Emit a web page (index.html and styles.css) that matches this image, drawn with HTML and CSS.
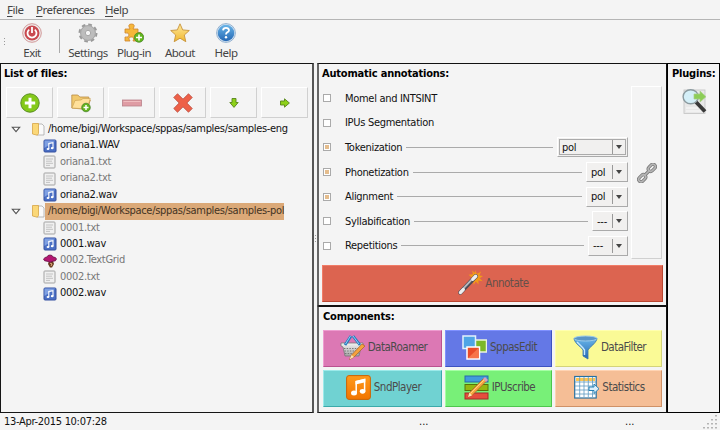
FILE: index.html
```html
<!DOCTYPE html>
<html lang="en">
<head>
<meta charset="utf-8">
<title>SPPAS</title>
<link rel="stylesheet" href="styles.css">
</head>
<body>
<svg class="defs" aria-hidden="true">
  <defs>
    <linearGradient id="gBlue" x2="0" y2="1"><stop stop-color="#68b4e8"/><stop offset="1" stop-color="#2568b4"/></linearGradient>
    <linearGradient id="gGold" x2="0" y2="1"><stop stop-color="#ffe89a"/><stop offset="1" stop-color="#f0b830"/></linearGradient>
    <linearGradient id="gSilver" x2="0" y2="1"><stop stop-color="#f4f4f4"/><stop offset="1" stop-color="#a4a4a4"/></linearGradient>
    <linearGradient id="gOrange" x2="0" y2="1"><stop stop-color="#ff9a1c"/><stop offset="1" stop-color="#f27500"/></linearGradient>
    <symbol id="folder" viewBox="0 0 14 14"><path d="M6 2h5l2 2v9H6z" fill="#fafafa" stroke="#aaa" stroke-width=".8"/><path d="M1.5 1.5h6v10l-1.2 1.7-4.8-1.2z" fill="#fbd878" stroke="#d5a546" stroke-width=".8"/></symbol>
    <symbol id="wav" viewBox="0 0 14 14"><rect x="1" y="1" width="12" height="12" rx="1" fill="#4a6fc4" stroke="#3451a0"/><path d="M1.5 1.5h11L1.5 9z" fill="#7fa0e2"/><path d="M5.8 10V4.5l4.2-.8V9" fill="none" stroke="#fff" stroke-width="1.1"/><ellipse cx="5" cy="10" rx="1.4" ry="1.1" fill="#fff"/><ellipse cx="9.2" cy="9.2" rx="1.4" ry="1.1" fill="#fff"/></symbol>
    <symbol id="txt" viewBox="0 0 14 14"><rect x="1" y="1" width="11" height="12" rx=".8" fill="#f0f0f0" stroke="#a2a2a2"/><path d="M3 4h7M3 6.2h6M3 8.3h7M3 10.4h4" stroke="#c2c2c2"/></symbol>
    <symbol id="grid" viewBox="0 0 14 14"><path d="M6 7h4l1 3-2 3.6H7L5 10z" fill="#6a3d22"/><path d="M7 9l2 1-1 2" stroke="#e9b486" fill="none"/><path d="M.5 5Q2 3 4 3q.5-2 3-2t3 2q3 0 3.5 2Q13 7.5 10 7.2L7 8.2 4 7.2Q1 7.5.5 5z" fill="#b31672" stroke="#671044" stroke-width=".8"/></symbol>
    <symbol id="tri" viewBox="0 0 8 6"><path d="M.8 1h6.4L4 4.8z" fill="#fff" stroke="#555" stroke-width=".9"/></symbol>
    <symbol id="arrow" viewBox="0 0 12 12"><path d="M1.5 4h4V1.8L10.4 6l-4.9 4.2V8h-4z" fill="#8ed119" stroke="#57851c" stroke-width=".9"/></symbol>
  </defs>
</svg>
<div class="window">
  <nav class="menubar"><span class="m1"><u>F</u>ile</span><span class="m2"><u>P</u>references</span><span class="m3"><u>H</u>elp</span></nav>
  <header class="toolbar">
    <i class="grip"></i>
    <div class="tool exit"><svg viewBox="0 0 20 20"><circle cx="10" cy="10" r="9.3" fill="#eee" stroke="#c98080" stroke-width=".8"/><circle cx="10" cy="10" r="7.5" fill="#c94a50"/><path d="M7.2 6.6a4.5 4.5 0 1 0 5.6 0M10 4v6" fill="none" stroke="#fff" stroke-width="1.8"/></svg><span>Exit</span></div>
    <i class="divider"></i>
    <div class="tool settings"><svg viewBox="0 0 20 20"><circle cx="10" cy="10" r="8" fill="none" stroke="#999" stroke-width="3" stroke-dasharray="3.5 2.78"/><circle cx="10" cy="10" r="5.3" fill="none" stroke="#bdbdbd" stroke-width="5"/><circle cx="10" cy="10" r="7.4" fill="none" stroke="#a6a6a6" stroke-width="1"/><circle cx="10" cy="10" r="2.7" fill="#f5f5f5" stroke="#888" stroke-width=".7"/></svg><span>Settings</span></div>
    <div class="tool plugin"><svg viewBox="0 0 20 20"><path d="M1 6h5Q3 1 7.5 1T9 6h5v4q4-2 4 2t-4 2v4H9q2-4-1.8-4T6 18H1v-4q4 1 4-2T1 10z" fill="#f6b73a" stroke="#ce842b" stroke-width=".8"/><circle cx="15" cy="14.5" r="4.8" fill="#62b61c" stroke="#42812b" stroke-width=".7"/><path d="M12 14.5h6M15 11.5v6" stroke="#fff" stroke-width="1.6"/></svg><span>Plug-in</span></div>
    <div class="tool about"><svg viewBox="0 0 20 20"><path d="M10 .8l2.7 6.1 6.6.6-5 4.5 1.5 6.7L10 15.2 4.2 18.7 5.7 12 .7 7.5l6.6-.6z" fill="url(#gGold)" stroke="#c7933b" stroke-width=".9"/></svg><span>About</span></div>
    <div class="tool help"><svg viewBox="0 0 20 20"><circle cx="10" cy="10" r="9.4" fill="#dce9f5" stroke="#6b94bd" stroke-width=".7"/><circle cx="10" cy="10" r="8.3" fill="url(#gBlue)"/><path d="M7 7.3q.3-2.4 3-2.4t3 2.3q0 1.4-1.8 2.2-1.2.6-1.2 2" fill="none" stroke="#fff" stroke-width="1.8"/><circle cx="10" cy="14.2" r="1.2" fill="#fff"/></svg><span>Help</span></div>
  </header>
  <main class="workspace">
    <section class="files">
      <h2>List of files:</h2>
      <div class="file-buttons">
        <button><svg viewBox="0 0 20 20"><circle cx="10" cy="10" r="9.2" fill="#85c91a" stroke="#598e22" stroke-width="1"/><path d="M10 4.8v10.4M4.8 10h10.4" stroke="#fff" stroke-width="3"/></svg></button>
        <button><svg viewBox="0 0 20 20"><path d="M.8 15V2h6l2 2h9v3h1.5l-3 9.5z" fill="#f1c96d" stroke="#b98b43" stroke-width=".8"/><path d="M1 15L4 7.5l6-.5 2-1.5h7.3L16 16z" fill="#ffe09a" stroke="#c69a4d" stroke-width=".6"/><circle cx="15" cy="14.5" r="4.3" fill="#65b31e" stroke="#3f7a25" stroke-width=".7"/><path d="M12.5 14.5h5M15 12v5" stroke="#fff" stroke-width="1.5"/></svg></button>
        <button><svg viewBox="0 0 20 20"><rect x=".5" y="7" width="19" height="6" fill="#df9ca4" stroke="#b9828a" stroke-width=".8"/><path d="M1.5 8.5h17" stroke="#f0bdc0"/></svg></button>
        <button><svg viewBox="0 0 20 20"><path d="M4.5.8L10 6.2 15.5.8l3.7 3.7L13.8 10l5.4 5.5-3.7 3.7-5.5-5.4-5.5 5.4-3.7-3.7L6.2 10 .8 4.5z" fill="#ee6048" stroke="#bd5144" stroke-width=".9"/></svg></button>
        <button><svg class="small-icon down"><use href="#arrow"/></svg></button>
        <button><svg class="small-icon"><use href="#arrow"/></svg></button>
      </div>
      <ul class="tree">
        <li class="dir"><svg class="tri"><use href="#tri"/></svg><svg><use href="#folder"/></svg><span>/home/bigi/Workspace/sppas/samples/samples-eng</span></li>
        <li><svg><use href="#wav"/></svg><span>oriana1.WAV</span></li>
        <li class="muted"><svg><use href="#txt"/></svg><span>oriana1.txt</span></li>
        <li class="muted"><svg><use href="#txt"/></svg><span>oriana2.txt</span></li>
        <li><svg><use href="#wav"/></svg><span>oriana2.wav</span></li>
        <li class="dir selected"><svg class="tri"><use href="#tri"/></svg><svg><use href="#folder"/></svg><span>/home/bigi/Workspace/sppas/samples/samples-pol</span></li>
        <li class="muted"><svg><use href="#txt"/></svg><span>0001.txt</span></li>
        <li><svg><use href="#wav"/></svg><span>0001.wav</span></li>
        <li class="muted"><svg><use href="#grid"/></svg><span>0002.TextGrid</span></li>
        <li class="muted"><svg><use href="#txt"/></svg><span>0002.txt</span></li>
        <li><svg><use href="#wav"/></svg><span>0002.wav</span></li>
      </ul>
    </section>
    <div class="sash"><i class="grip"></i></div>
    <div class="middle">
      <section class="annotations">
        <h2>Automatic annotations:</h2>
        <div class="annotation-body">
          <div class="steps">
            <div class="step"><i class="check"></i><span>Momel and INTSINT</span></div>
            <div class="step"><i class="check"></i><span>IPUs Segmentation</span></div>
            <div class="step"><i class="check on"></i><span>Tokenization</span><hr><div class="combo wide"><b>pol</b><i></i></div></div>
            <div class="step"><i class="check on"></i><span>Phonetization</span><hr><div class="combo"><b>pol</b><i></i></div></div>
            <div class="step"><i class="check on"></i><span>Alignment</span><hr><div class="combo"><b>pol</b><i></i></div></div>
            <div class="step"><i class="check"></i><span>Syllabification</span><hr><div class="combo narrow"><b>---</b><i></i></div></div>
            <div class="step"><i class="check"></i><span>Repetitions</span><hr><div class="combo dash"><b>---</b><i></i></div></div>
          </div>
          <button class="link"><svg viewBox="0 0 20 20"><g fill="none" stroke="#777" stroke-width="3.2"><rect x="10.8" y="2.4" width="8" height="4.8" rx="2.4" transform="rotate(-45 14.8 4.8)"/><rect x="1.2" y="12.8" width="8" height="4.8" rx="2.4" transform="rotate(-45 5.2 15.2)"/><path d="M7 13l6-6"/></g><g fill="none" stroke="#b5b5b5" stroke-width="1.7"><rect x="10.8" y="2.4" width="8" height="4.8" rx="2.4" transform="rotate(-45 14.8 4.8)"/><rect x="1.2" y="12.8" width="8" height="4.8" rx="2.4" transform="rotate(-45 5.2 15.2)"/><path d="M7 13l6-6"/></g></svg></button>
        </div>
        <button class="annotate"><svg viewBox="0 0 26 26"><path d="M18 0l1.5 4.2L24 1.5l-1.8 4.2 3.8.5-3.4 2.5 3 3.1-4.4-.8.2 4-3-3-2 3.5-.9-4.5-4.3.5L14.5 8 11 5l4.5-.5-.8-4 3 2.5z" fill="#f29a19"/><path d="M2.5 23.5l16-17" stroke="#4c4c55" stroke-width="4.5" stroke-linecap="round"/><path d="M2.2 22.8l16-17" stroke="#b7bac0" stroke-width="2"/><path d="M2.5 23.5l3-3.2M15.5 9.6l3-3.1" stroke="#eee" stroke-width="3.4" stroke-linecap="round"/></svg><span>Annotate</span></button>
      </section>
      <section class="components">
        <h2>Components:</h2>
        <div class="component-grid">
          <button class="pink"><svg viewBox="0 0 25 25"><path d="M1 8h22v3l-2 1-2 9H5L3 12l-2-1z" fill="url(#gSilver)" stroke="#777" stroke-width=".8"/><path d="M4 13.5h16M4.5 16h15M5 18.5h14" stroke="#777" stroke-width="1.1" stroke-dasharray="1.4 1.3"/><path d="M5 10l6-9M20 10l-7-9" fill="none" stroke="#2779bd" stroke-width="2.8"/><path d="M5.5 9l5-8M19 9l-6-8" fill="none" stroke="#8ed0f5" stroke-width="1"/><path d="M9.5 24.5l2-4.5L22 9l3 2-11 11z" fill="#f5a13c" stroke="#a46328" stroke-width=".7"/><path d="M9.5 24.5l2-4.5 2.5 2z" fill="#fce1b3"/></svg><span>DataRoamer</span></button>
          <button class="blue"><svg viewBox="0 0 25 25"><rect x="13" y="5" width="11.5" height="12" fill="#7cb729" stroke="#eaf3dc" stroke-width="1.5"/><rect x="1" y="1" width="12.5" height="12.5" fill="#4fa5e6" stroke="#e3f1fb" stroke-width="1.5"/><rect x="5" y="12" width="12.5" height="12" fill="#ea4b29" stroke="#fff" stroke-width="1.5"/><path d="M6 23l10.5-10v10z" fill="#f7744a"/></svg><span>SppasEdit</span></button>
          <button class="yellow"><svg viewBox="0 0 25 25"><path d="M1 3.5h23q0 3-7.5 9.5l-1.5 2v9l-5-3v-6L8.5 13Q1 7 1 3.5z" fill="url(#gBlue)" stroke="#3773a8" stroke-width=".8"/><path d="M4 7l6 6 1.5 2v5" stroke="#c5e9ff" stroke-width="1.4" fill="none"/><ellipse cx="12.5" cy="3.5" rx="11.5" ry="2.5" fill="#5b95c6" stroke="#9ccbea" stroke-width="1"/></svg><span>DataFilter</span></button>
          <button class="teal"><svg viewBox="0 0 25 25"><rect x=".6" y=".6" width="23.8" height="23.8" rx="2.4" fill="url(#gOrange)" stroke="#cc6405"/><path d="M10.2 18V6.5l8.4-2v12" stroke="#fff" stroke-width="1.5" fill="none"/><path d="M9.5 6l9.8-2.3v3.5L9.5 9.5z" fill="#fff"/><ellipse cx="8" cy="18" rx="3" ry="2.5" fill="#fff"/><ellipse cx="16.6" cy="16.3" rx="2.8" ry="2.4" fill="#fff"/></svg><span>SndPlayer</span></button>
          <button class="green"><svg viewBox="0 0 25 25"><rect x="1" y="1" width="23" height="6" fill="#419bdc" stroke="#286ba5"/><rect x="1" y="9.5" width="23" height="6" fill="#94b710" stroke="#58720b"/><rect x="1" y="18" width="23" height="6" fill="#e54d3d" stroke="#a32d2b"/><path d="M4 22l1.5-4.5L20 3l3 2.5L8 20.5z" fill="#f6a540" stroke="#9c5e25" stroke-width=".7"/><path d="M4 22l1.5-4.5L8 20.5z" fill="#ffe5b4"/><path d="M6.5 18.5L21 4" stroke="#ffd47c"/><path d="M19 4l2-2 3 3-2 2z" fill="#d6a1c0"/></svg><span>IPUscribe</span></button>
          <button class="peach"><svg viewBox="0 0 25 25"><rect x=".7" y="1.5" width="21.5" height="21.5" fill="#fff" stroke="#2871a0" stroke-width="1.2"/><path d="M2 3h19v3H2z" fill="#ffc54f"/><path d="M5.7 2v20M10 2v20M14.3 2v20M18.5 2v20M1 7h21M1 11h21M1 15h21M1 19h21" stroke="#5d9bc2" stroke-width=".8"/><path d="M15 12h5V9l5 4.7-5 4.8v-3h-5z" fill="#ddf0fc" stroke="#2781b5"/></svg><span>Statistics</span></button>
        </div>
      </section>
    </div>
    <section class="plugins">
      <h2>Plugins:</h2>
      <svg viewBox="0 0 25 25"><rect x="2" y="1" width="21" height="23.5" fill="#e8e8e8" stroke="#c2c2c2" stroke-width=".8"/><path d="M4 19h12M4 22h15" stroke="#fafafa"/><path d="M14 13l9 9.5" stroke="#393939" stroke-width="3.8"/><ellipse cx="8.7" cy="7.7" rx="7.6" ry="7" fill="#d4eff8" stroke="#8b9a9f" stroke-width="1.4"/><path d="M12 5h6V2l6 5.7-6 5.3v-3h-6z" fill="#8ccd57" stroke="#a9cf87" stroke-width=".7"/></svg>
    </section>
  </main>
  <footer class="statusbar"><span class="date">13-Apr-2015 10:07:28</span><span class="s2">...</span><span class="s3">...</span><svg class="resize" viewBox="0 0 16 16"><path d="M14 2v14M10 6v10M6 10v6M2 14v2" stroke="#999" stroke-width="1.4" stroke-dasharray="1.4 2.6"/></svg></footer>
</div>
</body>
</html>
```
FILE: styles.css
```css
* { box-sizing: border-box; }
body { margin: 0; background: #f4f4f4; color: #111; font: 11px "DejaVu Sans Condensed", "DejaVu Sans", sans-serif; font-stretch: condensed; letter-spacing: -.3px; }
.defs { position: absolute; width: 0; height: 0; }
.window { width: 720px; height: 430px; overflow: hidden; display: flex; flex-direction: column; }
button { font: inherit; letter-spacing: inherit; padding: 0; border: 0; display: flex; align-items: center; justify-content: center; }
svg { display: block; flex: none; }
span { white-space: nowrap; }
h2 { margin: 0; font-size: 11px; line-height: 16px; padding-top: 1px; font-weight: bold; letter-spacing: -.2px; white-space: nowrap; color: #000; }
.menubar { display: flex; height: 20px; flex: none; border-bottom: 1px solid #b5b5b5; padding: 0 0 0 7px; line-height: 20px; color: #444; font-family: "Noto Sans", sans-serif; font-size: 11.5px; letter-spacing: -.5px; }
.menubar u { text-underline-offset: 2px; }
.m1 { width: 29px; } .m2 { width: 69px; }
.toolbar { display: flex; height: 43px; flex: none; color: #444; font-family: "Noto Sans", sans-serif; font-size: 11.5px; letter-spacing: -.55px; }
.grip { width: 3px; height: 9px; background: radial-gradient(circle, #999 .7px, transparent 1px) 0 0 / 3px 3px; }
.toolbar > .grip { margin: 17px 0 0 3px; }
.tool { display: flex; flex-direction: column; align-items: center; padding-top: 3px; width: 46px; }
.tool svg { width: 20px; height: 20px; }
.tool span { line-height: 20px; }
.tool.exit { margin-left: 3px; }
.divider { width: 1px; height: 24px; margin: 9px 5px 0 4px; background: #aaa; }
.workspace { display: flex; height: 350px; flex: none; }
.files { width: 314px; border: 1px solid #151515; border-right: 2px solid #555; padding: 1px 0 0 3px; }
.file-buttons { display: grid; grid-template-columns: repeat(6, 47px); gap: 4px; height: 31px; margin: 5px 0 0 2px; }
.file-buttons button, .link { background: #f4f4f4; border: 1px solid #fff; border-right-color: #d0d0d0; border-bottom-color: #d0d0d0; }
.file-buttons svg { width: 20px; height: 20px; }
.file-buttons .small-icon { width: 12px; height: 12px; }
.down { transform: rotate(90deg); }
.tree { list-style: none; padding: 0; margin: 3px 0 0 -3px; }
.tree li { height: 16.45px; display: flex; align-items: center; padding-left: 42px; }
.tree svg { width: 14px; height: 14px; }
.tree span { padding: 0 0 0 3px; line-height: 16.5px; }
.tree .dir { padding-left: 10px; }
.tree .tri { width: 10px; height: 7px; margin-right: 10px; }
.muted { color: #777; }
.selected span { background: #dba978; color: #433323; }
.sash { width: 3px; display: flex; align-items: center; }
.middle { width: 350px; display: flex; flex-direction: column; }
.annotations { height: 243px; border: 1px solid #111; border-left-width: 2px; border-left-color: #666; padding: 1px 4px 0 3px; }
.annotation-body { display: flex; height: 173px; margin-top: 4px; gap: 3px; }
.steps { width: 307px; padding-left: 1px; }
.step { display: flex; align-items: center; height: 24.6px; }
.check { width: 8px; height: 8px; border: 1px solid #aaa; background: #fff; margin-right: 14px; flex: none; }
.check.on { background: #e5bd8d; box-shadow: inset 0 0 0 1px #fff; }
.step hr { flex: 1; border: 0; height: 1px; background: #aaa; margin: 0 4px; }
.combo { width: 42px; height: 20px; background: #f1f0ef; border: 1px solid #fff; border-right-color: #aaa; border-bottom-color: #aaa; display: flex; align-items: center; }
.combo.wide { width: 71px; outline: 1px solid #aaa; outline-offset: -3px; }
.combo.narrow { width: 36px; } .combo.dash { width: 40px; }
.combo b { font-weight: normal; padding-left: 4px; flex: 1; }
.combo i { width: 15px; height: 14px; border-left: 1px solid #999; display: flex; align-items: center; justify-content: center; padding-right: 2px; }
.combo i::after { content: ""; border: 3.5px solid transparent; border-top: 4px solid #444; border-bottom: 0; }
.link { width: 31px; }
.link svg { width: 20px; height: 20px; }
.annotate { width: 341px; height: 37px; margin: 6px 0 0; background: #dc6450; color: #65504a; border: 1px solid #f17c67; border-right-color: #b94732; border-bottom-color: #b94732; gap: 2px; padding: 0 0 2px 2px; font-size: 11.5px; letter-spacing: -.5px; }
.annotate svg { width: 25px; height: 25px; }
.components { flex: 1; border: 1px solid #111; border-left: 2px solid #666; padding: 1px 3px 0 4px; }
.component-grid { display: grid; grid-template: 37px 37px / 119px 107px 107px; gap: 3px; margin-top: 5px; }
.component-grid button { border: 1px solid; color: #4b4b4b; gap: 3px; padding: 0 0 3px 2px; font-size: 11.5px; letter-spacing: -.5px; }
.component-grid svg { width: 25px; height: 25px; }
.pink { background: #dc78b4; border-color: #ee9cd0 #ba528f #ba528f #ee9cd0 !important; }
.blue { background: #6478e6; border-color: #8091ff #3d52c0 #3d52c0 #8091ff !important; }
.yellow { background: #fafa96; border-color: #ffffaf #d3d37b #d3d37b #ffffaf !important; }
.teal { background: #70d2d2; border-color: #9ceaea #3baaaa #3baaaa #9ceaea !important; }
.green { background: #78f078; border-color: #a5ffa5 #4dc64d #4dc64d #a5ffa5 !important; }
.peach { background: #f5be96; border-color: #ffd4b4 #cf9167 #cf9167 #ffd4b4 !important; }
.plugins { width: 53px; border: 1px solid #000; padding: 1px 0 0 4px; }
.plugins svg { width: 25px; height: 25px; margin: 7px 0 0 10px; }
.statusbar { display: flex; height: 17px; line-height: 17px; padding-left: 4px; }
.date { width: 415px; } .s2 { width: 206px; } .s3 { width: 77px; }
.s2, .s3 { letter-spacing: 0; }
.resize { width: 16px; height: 16px; }
```
